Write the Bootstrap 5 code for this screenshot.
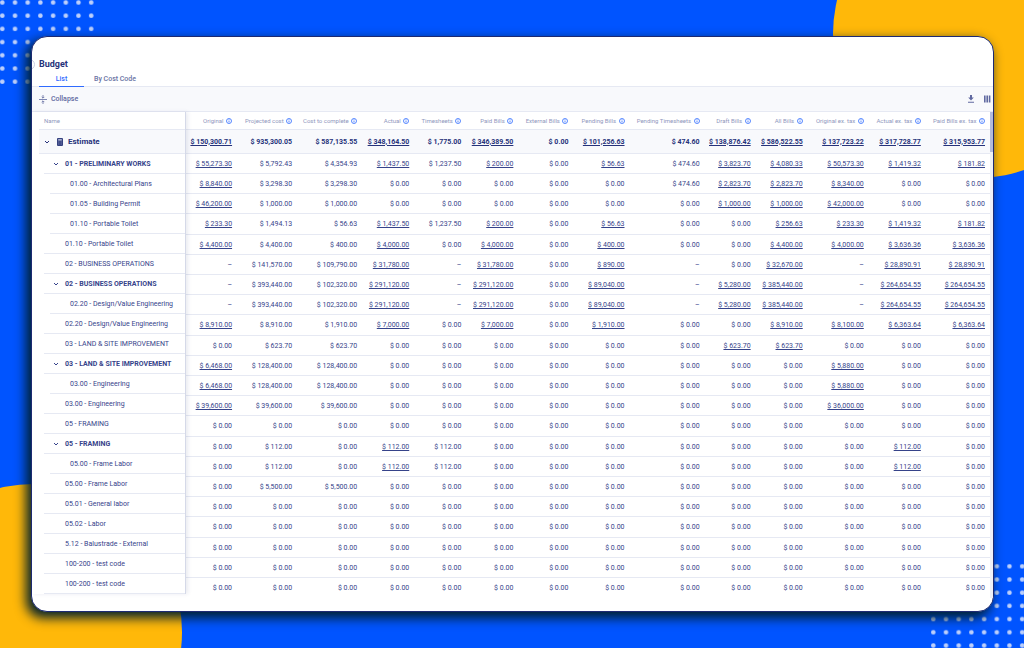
<!DOCTYPE html>
<html lang="en">
<head>
<meta charset="utf-8">
<meta name="viewport" content="width=device-width, initial-scale=1">
<title>Budget</title>
<link href="https://cdn.jsdelivr.net/npm/bootstrap@5.3.0/dist/css/bootstrap.min.css" rel="stylesheet">
<style>
  :root { --ink: #36438a; --ink-strong: #26327a; --muted-ink: #8f97bd; --line: #e6e9f3; --accent: #2f6bff; }
  body { font-family: Roboto, sans-serif; font-size: 7px; line-height: 10px; color: var(--ink); background: #0054ff; }
  .stage { min-height: 100vh; padding: 36px 30px 36px 31px; isolation: isolate; }
  .blob { position: absolute; border-radius: 50%; background: #ffb809; z-index: -1; }
  .blob-top { width: 288px; height: 288px; top: -110px; right: -97px; }
  .blob-bottom { width: 296px; height: 296px; left: -114px; bottom: -132px; }
  .dots { position: absolute; width: 94px; height: 85px; z-index: -1; }
  .dots-top { top: 0; left: 0; }
  .dots-bottom { right: 0; bottom: 0; }
  .window { border: 1px solid #1d2a72; border-radius: 16px; background: #fff; box-shadow: -4px 5px 12px 1px #00202c; overflow: hidden; }
  .side-handle { position: absolute; left: -8px; top: 22px; width: 11px; height: 11px; padding: 0; border: 1px solid #c9cde0; border-radius: 50%; background: #fff; }
  .page-head { padding: 20px 0 0 7px; border-bottom: 1px solid var(--line); }
  .page-title { font-size: 9px; line-height: 14px; font-weight: 700; color: var(--ink-strong); }
  .tab-link { padding: 3px 0 2px; font-weight: 500; color: #6a73a3; background: none; border: 0; border-bottom: 1px solid transparent; min-width: 45px; margin-bottom: -1px; }
  .tab-link.active { color: var(--accent); border-color: var(--accent); }
  .tab-link + .tab-link { padding-left: 10px; }
  .tools { height: 25px; padding: 0 2px 0 7px; background: #f8f9fc; border-bottom: 1px solid var(--line); }
  .tool-btn { padding: 0; border: 0; background: none; color: #6069a0; font-weight: 500; line-height: 10px; }
  .tool-btn svg, .sheet svg { display: block; }
  .sheet { width: 100%; border-collapse: separate; border-spacing: 0; }
  .sheet th, .sheet td { padding: 0; height: 20px; white-space: nowrap; font-weight: 400; }
  .sheet thead th { height: 18px; color: var(--muted-ink); font-size: 6px; }
  .pane-names { width: 154px; flex: none; padding-left: 7px; border-right: 1px solid #d5d9e8; box-shadow: 2px 0 4px #1f2b6918; position: relative; z-index: 1; }
  .cell { display: flex; align-items: center; height: 20px; border-bottom: 1px solid var(--line); }
  thead .cell { height: 18px; padding-left: 5px; }
  .sheet .lvl0 th { height: 24px; }
  .lvl0 .cell { height: 24px; padding-left: 5px; gap: 5px; background: #f8f9fc; font-size: 8px; font-weight: 700; color: var(--ink-strong); }
  .lvl1 .cell { margin-left: 5px; padding-left: 8px; gap: 3px; }
  .lvl1 .cell::before { content: ""; width: 10px; }
  .lvl1.group .cell::before { content: none; }
  .lvl1.group .cell { font-weight: 700; padding-left: 9px; gap: 4px; }
  .lvl2 .cell { margin-left: 11px; padding-left: 20px; }
  .chev { border: 0; padding: 0; background: none; color: inherit; width: 8px; }
  .amounts { table-layout: fixed; }
  .amounts th, .amounts td { text-align: right; padding-right: 5px; border-bottom: 1px solid var(--line); }
  .amounts a { color: inherit; text-decoration: underline; text-underline-offset: 1px; }
  .amounts tbody tr:nth-child(5n) td { height: 21px; }
  .amounts tbody tr:first-child td { height: 24px; background: #f8f9fc; font-weight: 700; color: var(--ink-strong); }
  .amounts tbody tr:last-child td { border-bottom: 0; }
  .amounts th svg { display: inline-block; color: var(--accent); margin-left: 1px; vertical-align: -1px; }
  .track { width: 3px; flex: none; background: #eef0f7; }
  .thumb { height: 40px; background: #b4badb; }
</style>
</head>
<body>
<div class="stage position-relative overflow-hidden d-flex flex-column">
  <div class="blob blob-top"></div>
  <div class="blob blob-bottom"></div>
  <svg class="dots dots-top" aria-hidden="true"><defs><pattern id="dot" width="12.7" height="13.2" patternUnits="userSpaceOnUse"><circle cx="2.3" cy="2.5" r="2.3" fill="#bccffb"/></pattern></defs><rect width="94" height="85" fill="url(#dot)"/></svg>
  <svg class="dots dots-bottom" aria-hidden="true"><g transform="translate(1 .8)"><rect width="94" height="85" fill="url(#dot)"/></g></svg>

  <main class="window position-relative flex-grow-1">
    <button class="side-handle" aria-label="Open menu"></button>
    <header class="page-head">
      <h1 class="page-title mb-0">Budget</h1>
      <nav class="d-flex" role="tablist">
        <button class="tab-link active" role="tab" aria-selected="true">List</button>
        <button class="tab-link" role="tab" aria-selected="false">By Cost Code</button>
      </nav>
    </header>
    <div class="tools d-flex align-items-center justify-content-between">
      <button class="tool-btn d-flex align-items-center gap-1">
        <svg width="8" height="9" viewBox="0 0 8 9" fill="none" stroke="currentColor" stroke-width=".8"><path d="M0 4.5h8M4 0v3M4 9V6M2.7 1.9 4 3.2l1.3-1.3M2.7 7.1 4 5.8l1.3 1.3"/></svg>
        Collapse
      </button>
      <div class="d-flex align-items-center gap-2">
        <button class="tool-btn" aria-label="Download"><svg width="8" height="8" viewBox="0 0 8 8" fill="currentColor"><path d="M3 0h2v2.6h1.8L4 5.6 1.2 2.6H3zM1 6.8h6v1H1z"/></svg></button>
        <button class="tool-btn" aria-label="Columns"><svg width="8" height="8" viewBox="0 0 8 8" fill="currentColor"><path d="M1 .5h1.6v7H1zM3.4.5H5v7H3.4zM5.8.5h1.6v7H5.8z"/></svg></button>
      </div>
    </div>
    <div class="d-flex align-items-start">
      <div class="pane-names">
        <table class="sheet">
          <thead><tr><th scope="col"><div class="cell">Name</div></th></tr></thead>
          <tbody id="names"></tbody>
        </table>
      </div>
      <div class="flex-grow-1">
        <table class="sheet amounts">
          <colgroup id="cols"></colgroup>
          <thead><tr id="heads"></tr></thead>
          <tbody id="amounts"></tbody>
        </table>
      </div>
      <div class="track align-self-stretch"><div class="thumb"></div></div>
    </div>
  </main>
</div>
<script src="https://cdn.jsdelivr.net/npm/bootstrap@5.3.0/dist/js/bootstrap.bundle.min.js"></script>
<script>
  // Column title and relative width
  const columns = [["Original", 51], ["Projected cost", 60], ["Cost to complete", 65], ["Actual", 52], ["Timesheets", 52],
    ["Paid Bills", 52], ["External Bills", 55], ["Pending Bills", 56], ["Pending Timesheets", 75], ["Draft Bills", 51],
    ["All Bills", 52], ["Original ex. tax", 61], ["Actual ex. tax", 57], ["Paid Bills ex. tax", 64]];
  // Level, name, amounts; * marks an amount that links to its detail
  const Z = "0.00 ";
  const rows = [
    [0, "Estimate", "*150,300.71 935,300.05 587,135.55 *348,164.50 1,775.00 *346,389.50 0.00 *101,256.63 474.60 *138,876.42 *586,522.55 *137,723.22 *317,728.77 *315,953.77"],
    ["g", "01 - PRELIMINARY WORKS", "*55,273.30 5,792.43 4,354.93 *1,437.50 1,237.50 *200.00 0.00 *56.63 474.60 *3,823.70 *4,080.33 *50,573.30 *1,419.32 *181.82"],
    [2, "01.00 - Architectural Plans", "*8,840.00 3,298.30 3,298.30 0.00 0.00 0.00 0.00 0.00 474.60 *2,823.70 *2,823.70 *8,340.00 0.00 0.00"],
    [2, "01.05 - Building Permit", "*46,200.00 1,000.00 1,000.00 0.00 0.00 0.00 0.00 0.00 0.00 *1,000.00 *1,000.00 *42,000.00 0.00 0.00"],
    [2, "01.10 - Portable Toilet", "*233.30 1,494.13 56.63 *1,437.50 1,237.50 *200.00 0.00 *56.63 0.00 0.00 *256.63 *233.30 *1,419.32 *181.82"],
    [1, "01.10 - Portable Toilet", "*4,400.00 4,400.00 400.00 *4,000.00 0.00 *4,000.00 0.00 *400.00 0.00 0.00 *4,400.00 *4,000.00 *3,636.36 *3,636.36"],
    [1, "02 - BUSINESS OPERATIONS", "– 141,570.00 109,790.00 *31,780.00 – *31,780.00 0.00 *890.00 – 0.00 *32,670.00 – *28,890.91 *28,890.91"],
    ["g", "02 - BUSINESS OPERATIONS", "– 393,440.00 102,320.00 *291,120.00 – *291,120.00 0.00 *89,040.00 – *5,280.00 *385,440.00 – *264,654.55 *264,654.55"],
    [2, "02.20 - Design/Value Engineering", "– 393,440.00 102,320.00 *291,120.00 – *291,120.00 0.00 *89,040.00 – *5,280.00 *385,440.00 – *264,654.55 *264,654.55"],
    [1, "02.20 - Design/Value Engineering", "*8,910.00 8,910.00 1,910.00 *7,000.00 0.00 *7,000.00 0.00 *1,910.00 0.00 0.00 *8,910.00 *8,100.00 *6,363.64 *6,363.64"],
    [1, "03 - LAND & SITE IMPROVEMENT", "0.00 623.70 623.70 " + Z.repeat(6) + "*623.70 *623.70 0.00 0.00 0.00"],
    ["g", "03 - LAND & SITE IMPROVEMENT", "*6,468.00 128,400.00 128,400.00 " + Z.repeat(8) + "*5,880.00 0.00 0.00"],
    [2, "03.00 - Engineering", "*6,468.00 128,400.00 128,400.00 " + Z.repeat(8) + "*5,880.00 0.00 0.00"],
    [1, "03.00 - Engineering", "*39,600.00 39,600.00 39,600.00 " + Z.repeat(8) + "*36,000.00 0.00 0.00"],
    [1, "05 - FRAMING", Z.repeat(14)],
    ["g", "05 - FRAMING", "0.00 112.00 0.00 *112.00 112.00 " + Z.repeat(7) + "*112.00 0.00"],
    [2, "05.00 - Frame Labor", "0.00 112.00 0.00 *112.00 112.00 " + Z.repeat(7) + "*112.00 0.00"],
    [1, "05.00 - Frame Labor", "0.00 5,500.00 5,500.00 " + Z.repeat(11)],
    [1, "05.01 - General labor", Z.repeat(14)],
    [1, "05.02 - Labor", Z.repeat(14)],
    [1, "5.12 - Balustrade - External", Z.repeat(14)],
    [1, "100-200 - test code", Z.repeat(14)],
    [1, "100-200 - test code", Z.repeat(14)]
  ];
  const info = '<svg width="6" height="6" viewBox="0 0 6 6" fill="none" stroke="currentColor" stroke-width=".8"><circle cx="3" cy="3" r="2.5"/><path d="M3 2.7v1.7M3 1.4v.8"/></svg>';
  const chevron = '<button class="chev" aria-label="Toggle group"><svg width="6" height="6" viewBox="0 0 6 6" fill="none" stroke="currentColor" stroke-width="1"><path d="M1 2l2 2 2-2"/></svg></button>';
  const calc = '<svg width="6" height="8" viewBox="0 0 6 8"><rect width="6" height="8" rx="1" fill="#35417f"/><path d="M1.2 1.3h3.6v1.2H1.2z" fill="#cfd4ea"/><path d="M1.2 4h3.6M1.2 6h3.6" stroke="#8d96c4" stroke-width=".8" stroke-dasharray=".8 .6"/></svg>';
  const money = v => v === "–" ? v : v[0] === "*" ? `<a href="#">$ ${v.slice(1)}</a>` : "$ " + v;

  document.getElementById("cols").innerHTML = columns.map(c => `<col style="width:${c[1] / 8.03}%">`).join("");
  document.getElementById("heads").innerHTML = columns.map(c => `<th scope="col">${c[0]} ${info}</th>`).join("");
  document.getElementById("names").innerHTML = rows.map(([l, n]) =>
    `<tr class="${l === "g" ? "lvl1 group" : "lvl" + l}"><th scope="row"><div class="cell">${l === 0 || l === "g" ? chevron : ""}${l === 0 ? calc : ""}<span>${n.replace("&", "&amp;")}</span></div></th></tr>`).join("");
  document.getElementById("amounts").innerHTML = rows.map(r =>
    "<tr>" + r[2].trim().split(" ").map(v => `<td>${money(v)}</td>`).join("") + "</tr>").join("");
</script>
</body>
</html>
